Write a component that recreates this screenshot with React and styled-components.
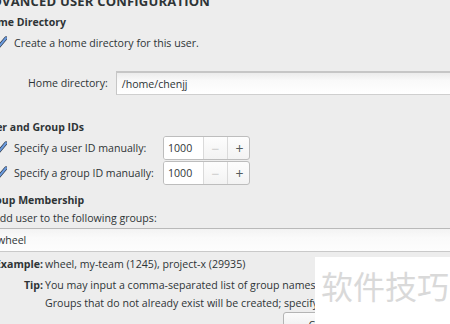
import React from 'react';
import styled, { createGlobalStyle } from 'styled-components';

const Global = createGlobalStyle`
  html, body { margin: 0; padding: 0; background: #ededed; overflow: hidden; }
  body {
    width: 450px; height: 324px;
    font-family: "Open Sans", "Liberation Sans", sans-serif;
    font-size: 10.6px; color: #2e3436;
  }
`;

const Screen = styled.div`
  position: relative;
  width: 450px;
  height: 324px;
  overflow: hidden;
`;

const Content = styled.div`
  display: flex;
  flex-direction: column;
  margin-left: -17px;
  margin-top: -6px;
  width: 500px;
`;

const Title = styled.div`
  height: 14px;
  line-height: 14px;
  font-size: 13px;
  font-weight: 700;
  letter-spacing: 0.2px;
  white-space: nowrap;
  color: #2e3436;
`;

const Heading = styled.div`
  height: 14px;
  line-height: 14px;
  margin-top: ${p => p.$mt}px;
  font-weight: 700;
  font-size: 10.5px;
  white-space: nowrap;
  color: #2e3436;
`;

const Sub = styled.div`
  margin-left: 10px;
  margin-top: ${p => p.$mt}px;
`;

const CheckRow = styled.div`
  display: grid;
  grid-template-columns: 14px 142px auto;
  column-gap: 7px;
  align-items: center;
  height: ${p => p.$h || 14}px;
  white-space: nowrap;
`;

const Label = styled.span`
  white-space: nowrap;
`;

const Spacer = styled.div`
  height: ${p => p.$h}px;
`;

const FieldRow = styled.div`
  display: flex;
  align-items: center;
  height: 24px;
  margin-left: 35px;
  gap: 8px;
`;

const TextInput = styled.div`
  flex: 1;
  height: 24px;
  box-sizing: border-box;
  border-top: 2px solid #c6c6c6;
  border-bottom: 1px solid #cfcfcf;
  border-left: 1px solid #c6c6c6;
  background: linear-gradient(#ececec, #f9f9f9 35%, #ffffff);
  display: flex;
  align-items: center;
  padding-left: 5px;
  color: #2e3436;
  white-space: nowrap;
`;

const Spin = styled.div`
  display: grid;
  grid-template-columns: 40px 24px 23px;
  width: 87px;
  height: 24px;
  box-sizing: border-box;
  border: 1px solid #bdbdbd;
  border-radius: 3px;
  background: linear-gradient(#fdfdfd, #f3f3f3);
  overflow: hidden;
`;

const SpinValue = styled.div`
  display: flex;
  align-items: center;
  padding-left: 4px;
  background: #fff;
  border-right: 1px solid #dadada;
`;

const SpinBtn = styled.div`
  display: flex;
  align-items: center;
  justify-content: center;
  font-size: 14px;
  color: ${p => (p.$disabled ? '#cdcdcd' : '#555b5d')};
  border-right: ${p => (p.$last ? 'none' : '1px solid #dadada')};
`;

const Plain = styled.div`
  height: 14px;
  line-height: 14px;
  white-space: nowrap;
`;

const GroupsInput = styled.div`
  margin-top: 3px;
  margin-left: -6px;
  height: 24px;
  box-sizing: border-box;
  border-top: 1px solid #b9b9b9;
  border-bottom: 1px solid #c9c9c9;
  background: linear-gradient(#f3f3f3, #fafafa 40%, #fdfdfd);
  display: flex;
  align-items: center;
  padding-left: 10px;
  white-space: nowrap;
`;

const InfoGrid = styled.div`
  display: grid;
  grid-template-columns: 50px auto;
  column-gap: 2px;
  margin-top: 5px;
  row-gap: 5px;
  white-space: nowrap;
`;

const InfoLabel = styled.div`
  font-weight: 700;
  text-align: right;
  line-height: 14px;
  margin-top: ${p => p.$mt || 0}px;
`;

const InfoText = styled.div`
  line-height: ${p => p.$lh || 18}px;
`;

const ButtonRow = styled.div`
  display: flex;
  margin-top: 0px;
  margin-left: 290px;
`;

const Button = styled.div`
  width: 84px;
  height: 26px;
  box-sizing: border-box;
  border: 1px solid #b4b4b4;
  border-radius: 3px;
  background: linear-gradient(#fbfbfb, #e9e9e9);
  display: flex;
  align-items: center;
  justify-content: center;
  color: #2e3436;
`;

const Watermark = styled.div`
  position: absolute;
  left: 315px;
  top: 257px;
  right: 0;
  bottom: 0;
  background: #ffffff;
  color: #d9d9d9;
  font-family: "Noto Sans CJK SC", sans-serif;
  font-size: 32px;
  line-height: 56px;
  padding-left: 6px;
  white-space: nowrap;
`;

const Check = () => (
  <svg width="14" height="14" viewBox="0 0 14 14">
    <path d="M2 8 L5.5 11 L13 2" fill="none" stroke="#2f3b4a" strokeWidth="3.4" strokeLinecap="round" strokeLinejoin="round" />
    <path d="M2 8 L5.5 11 L13 2" fill="none" stroke="#6b9be0" strokeWidth="2" strokeLinecap="round" strokeLinejoin="round" />
  </svg>
);

export default function App() {
  return (
    <Screen>
      <Global />
      <Content>
        <Title>ADVANCED USER CONFIGURATION</Title>

        <Heading $mt={7}>Home Directory</Heading>
        <Sub $mt={7}>
          <CheckRow>
            <Check />
            <Label>Create a home directory for this user.</Label>
          </CheckRow>
          <Spacer $h={21} />
          <FieldRow>
            <Label>Home directory:</Label>
            <TextInput>/home/chenjj</TextInput>
          </FieldRow>
        </Sub>

        <Heading $mt={25}>User and Group IDs</Heading>
        <Sub $mt={2}>
          <CheckRow $h={24}>
            <Check />
            <Label>Specify a user ID manually:</Label>
            <Spin>
              <SpinValue>1000</SpinValue>
              <SpinBtn $disabled>−</SpinBtn>
              <SpinBtn $last>+</SpinBtn>
            </Spin>
          </CheckRow>
          <Spacer $h={1} />
          <CheckRow $h={24}>
            <Check />
            <Label>Specify a group ID manually:</Label>
            <Spin>
              <SpinValue>1000</SpinValue>
              <SpinBtn $disabled>−</SpinBtn>
              <SpinBtn $last>+</SpinBtn>
            </Spin>
          </CheckRow>
        </Sub>

        <Heading $mt={8}>Group Membership</Heading>
        <Sub $mt={4}>
          <Plain>Add user to the following groups:</Plain>
          <GroupsInput>wheel</GroupsInput>
          <InfoGrid>
            <InfoLabel>Example:</InfoLabel>
            <InfoText $lh={14}>wheel, my-team (1245), project-x (29935)</InfoText>
            <InfoLabel $mt={2}>Tip:</InfoLabel>
            <InfoText>
              You may input a comma-separated list of group names and group IDs here.
              <br />
              Groups that do not already exist will be created; specify their GID in parentheses.
            </InfoText>
          </InfoGrid>
          <ButtonRow>
            <Button>Cancel</Button>
          </ButtonRow>
        </Sub>
      </Content>
      <Watermark>软件技巧</Watermark>
    </Screen>
  );
}
